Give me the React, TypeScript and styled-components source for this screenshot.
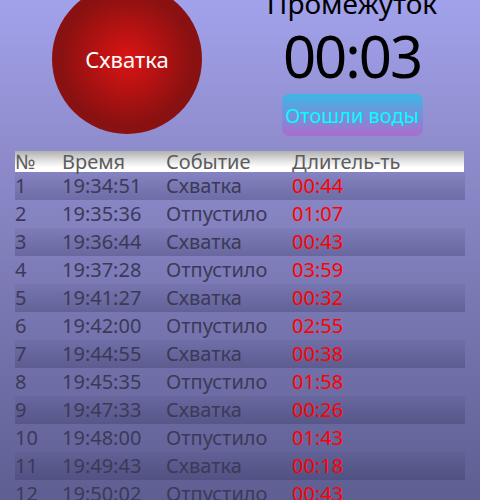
import React from "react";
import styled, { createGlobalStyle } from "styled-components";

const Global = createGlobalStyle`
  html, body { margin: 0; padding: 0; }
  body {
    width: 480px;
    height: 500px;
    overflow: hidden;
    background: linear-gradient(180deg, #a2a2ec 0%, #8e8ccc 30%, #5e5e92 100%);
    font-family: "Noto Sans", "DejaVu Sans", sans-serif;
  }
`;

const Page = styled.div`
  width: 480px;
  height: 500px;
  overflow: hidden;
`;

const Top = styled.div`
  display: flex;
  align-items: flex-start;
  height: 167px;
  margin-top: -16px;
`;

const Circle = styled.div`
  width: 150px;
  height: 150px;
  margin-left: 52px;
  border-radius: 50%;
  background: radial-gradient(circle at 50% 50%, #dc1414 0%, #b51212 30%, #8a1111 62%, #8a1111 100%);
  display: flex;
  align-items: center;
  justify-content: center;
  color: #ffffff;
  font-size: 22px;
  padding-bottom: 0;
`;

const Side = styled.div`
  width: 170px;
  margin-left: 65px;
  display: flex;
  flex-direction: column;
  align-items: center;
`;

const Title = styled.div`
  margin-top: 2px;
  font-size: 28px;
  line-height: 34px;
  color: #000;
  white-space: nowrap;
`;

const Timer = styled.div`
  margin-top: 4px;
  font-size: 58px;
  line-height: 64px;
  letter-spacing: -2px;
  color: #000;
`;

const WaterButton = styled.button`
  margin-top: 6px;
  width: 141px;
  height: 42px;
  border: none;
  border-radius: 7px;
  background: linear-gradient(180deg, #3cb6e6 0%, #7b8ed9 55%, #aa6ccc 100%);
  color: #00ffff;
  font-family: inherit;
  font-size: 20px;
  padding: 0;
  white-space: nowrap;
`;

const Table = styled.div`
  margin: 0 15px;
  display: flex;
  flex-direction: column;
`;

const cols = "47px 104px 126px 1fr";

const HeadRow = styled.div`
  display: grid;
  grid-template-columns: ${cols};
  height: 21px;
  line-height: 21px;
  margin-right: 1px;
  background: linear-gradient(180deg, #b0b0b0 0%, #e6e6e6 50%, #ffffff 78%, #ffffff 100%);
  color: #5c5c5c;
  font-size: 20px;
`;

const Row = styled.div<{ $shade: boolean }>`
  display: grid;
  grid-template-columns: ${cols};
  height: 28px;
  line-height: 28px;
  font-size: 20px;
  color: #3a3a58;
  background: ${(p) =>
    p.$shade
      ? "linear-gradient(180deg, rgba(40,40,90,0.06) 0%, rgba(30,30,70,0.24) 100%)"
      : "transparent"};
`;

const Cell = styled.div`
  white-space: nowrap;
  overflow: visible;
`;

const Dur = styled(Cell)`
  color: #ff0000;
`;

const data: [string, string, string][] = [
  ["19:34:51", "Схватка", "00:44"],
  ["19:35:36", "Отпустило", "01:07"],
  ["19:36:44", "Схватка", "00:43"],
  ["19:37:28", "Отпустило", "03:59"],
  ["19:41:27", "Схватка", "00:32"],
  ["19:42:00", "Отпустило", "02:55"],
  ["19:44:55", "Схватка", "00:38"],
  ["19:45:35", "Отпустило", "01:58"],
  ["19:47:33", "Схватка", "00:26"],
  ["19:48:00", "Отпустило", "01:43"],
  ["19:49:43", "Схватка", "00:18"],
  ["19:50:02", "Отпустило", "00:43"],
];

export default function App() {
  return (
    <Page>
      <Global />
      <Top>
        <Circle>Схватка</Circle>
        <Side>
          <Title>Промежуток</Title>
          <Timer>00:03</Timer>
          <WaterButton>Отошли воды</WaterButton>
        </Side>
      </Top>
      <Table>
        <HeadRow>
          <Cell>№</Cell>
          <Cell>Время</Cell>
          <Cell>Событие</Cell>
          <Cell>Длитель-ть</Cell>
        </HeadRow>
        {data.map((r, i) => (
          <Row key={i} $shade={i % 2 === 0}>
            <Cell>{i + 1}</Cell>
            <Cell>{r[0]}</Cell>
            <Cell>{r[1]}</Cell>
            <Dur>{r[2]}</Dur>
          </Row>
        ))}
      </Table>
    </Page>
  );
}
